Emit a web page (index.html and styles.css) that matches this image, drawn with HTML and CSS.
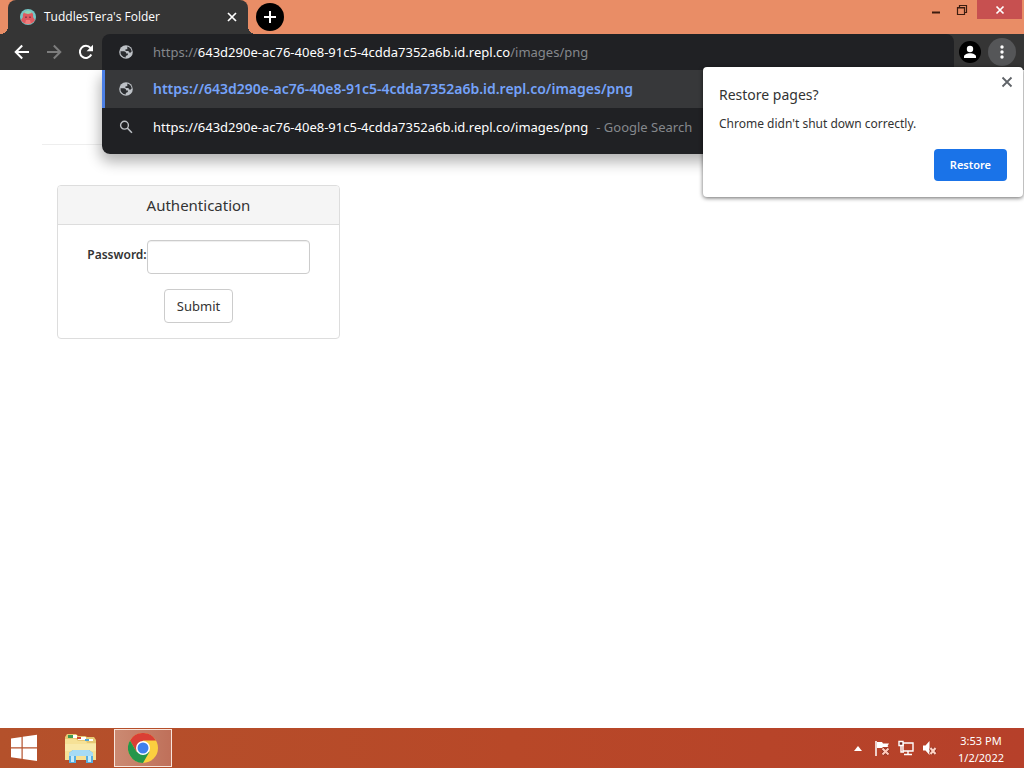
FILE: index.html
```html
<!DOCTYPE html>
<html lang="en">
<head>
<meta charset="utf-8">
<title>TuddlesTera's Folder</title>
<link rel="stylesheet" href="styles.css">
</head>
<body>
<svg class="defs" aria-hidden="true">
  <symbol id="globe" viewBox="0 0 16 16">
    <circle cx="8" cy="8" r="6.800" fill="#bdc1c6"/>
    <path d="M2.500 7.300h3.300c1.700 0 2.400 1 2.400 2.300h1.900c-.1 1.600-.8 2.200-2.300 2.300v1.700a5.600 5.600 0 0 1-5.300-6.300zM9.300 2.500c2.500.6 4.200 2.500 4.400 5L12.300 8.700c-1.300 0-1.700-.7-1.700-1.700H7.500V5.200h1.800z" fill="#2b2d30"/>
  </symbol>
</svg>
<header class="titlebar">
  <div class="tab">
    <svg class="favicon" viewBox="0 0 16 16"><circle cx="8" cy="8" r="8" fill="#74c6c6"/><path d="M3 8C2 3 6 2 8 3c3-1 6 1 5 5l2 3a8 8 0 0 1-14 0z" fill="#df5a60"/><path d="M4 4c2-3 6-3 8 0L8 5z" fill="#8fd6b5"/><path d="M5 7.500h2V9H5zm4 0h2V9H9z" fill="#8f3d49"/><path d="M6 11h4l1 4H5z" fill="#f07f7d"/></svg>
    <span class="tab-title">TuddlesTera's Folder</span>
    <button class="plain tab-close" aria-label="Close tab"><svg width="10" height="10" viewBox="0 0 10 10"><path d="M1 1l8 8M9 1L1 9" stroke="#fff" stroke-width="1.700"/></svg></button>
  </div>
  <button class="new-tab" aria-label="New tab"><svg width="12" height="12" viewBox="0 0 12 12"><path d="M6 0v12M0 6h12" stroke="#fff" stroke-width="2"/></svg></button>
  <div class="window-buttons">
    <button class="plain" aria-label="Minimize"><svg width="10" height="14" viewBox="0 0 10 14"><path d="M1 9.500h8" stroke="#3c1d10" stroke-width="2"/></svg></button>
    <button class="plain" aria-label="Restore window"><svg width="12" height="12" viewBox="0 0 12 12"><path d="M1.500 3.500h7v7h-7zM1 4h8M3.500 3V1.500h7v7H9" fill="none" stroke="#3c1d10" stroke-width="1.200"/></svg></button>
    <button class="plain window-close" aria-label="Close window"><svg width="10" height="10" viewBox="0 0 10 10"><path d="M1.500 1.500l7 7M8.500 1.500l-7 7" stroke="#fff" stroke-width="1.700"/></svg></button>
  </div>
</header>
<nav class="toolbar">
  <div class="nav-buttons">
    <button class="plain" aria-label="Back"><svg width="16" height="16" viewBox="0 0 16 16"><path d="M15 8H2M8.200 1.500 1.700 8l6.500 6.500" fill="none" stroke="#fff" stroke-width="2"/></svg></button>
    <button class="plain" aria-label="Forward"><svg width="16" height="16" viewBox="0 0 16 16"><path d="M1 8h13M7.800 1.500 14.300 8l-6.500 6.500" fill="none" stroke="#7d7d7d" stroke-width="2"/></svg></button>
    <button class="plain" aria-label="Reload"><svg width="16" height="16" viewBox="0 0 16 16"><path d="M13.300 10.500A6 6 0 1 1 12.500 4" fill="none" stroke="#fff" stroke-width="2"/><path d="M15 .8v6.400H8.600z" fill="#fff"/></svg></button>
  </div>
  <div class="omnibox">
    <div class="row address"><svg class="row-icon"><use href="#globe"/></svg><span class="dim">https://<span class="host">643d290e-ac76-40e8-91c5-4cdda7352a6b.id.repl.co</span>/images/png</span></div>
    <div class="suggestions">
      <a class="row selected" href="#"><svg class="row-icon"><use href="#globe"/></svg><span>https://643d290e-ac76-40e8-91c5-4cdda7352a6b.id.repl.co/images/png</span></a>
      <a class="row" href="#"><svg class="row-icon" viewBox="0 0 16 16"><circle cx="6.500" cy="6.200" r="3.900" fill="none" stroke="#bdc1c6" stroke-width="1.400"/><path d="M9.300 9l4.600 4.700" stroke="#bdc1c6" stroke-width="1.600"/></svg><span>https://643d290e-ac76-40e8-91c5-4cdda7352a6b.id.repl.co/images/png</span><span class="dim provider">- Google Search</span></a>
    </div>
  </div>
  <div class="tools">
    <button class="plain profile" aria-label="Profile"><svg width="22" height="22" viewBox="0 0 22 22"><circle cx="11" cy="11" r="11" fill="#000"/><circle cx="11" cy="8" r="3.200" fill="#fff"/><path d="M5 17v-1.500c0-2 3-3.300 6-3.300s6 1.300 6 3.300V17z" fill="#fff"/></svg></button>
    <button class="plain menu" aria-label="Menu"><svg width="4" height="14" viewBox="0 0 4 14" fill="#fff"><circle cx="2" cy="2" r="1.700"/><circle cx="2" cy="7" r="1.700"/><circle cx="2" cy="12" r="1.700"/></svg></button>
  </div>
  <section class="bubble">
    <button class="plain bubble-close" aria-label="Dismiss"><svg width="12" height="12" viewBox="0 0 12 12"><path d="M1.500 1.500l9 9M10.500 1.500l-9 9" stroke="#5f6368" stroke-width="1.800"/></svg></button>
    <h2>Restore pages?</h2>
    <p>Chrome didn't shut down correctly.</p>
    <button class="restore">Restore</button>
  </section>
</nav>
<main>
  <hr>
  <form class="card">
    <h1>Authentication</h1>
    <div class="card-body">
      <div class="field"><label for="password">Password:</label><input id="password" type="password"></div>
      <button class="submit" type="button">Submit</button>
    </div>
  </form>
</main>
<footer class="taskbar">
  <button class="plain start" aria-label="Start"><svg width="28" height="28" viewBox="0 0 28 28" fill="#fff"><path d="M1 4.500 11.500 3v10.300H1zM12.700 2.800 27 .8v12.500H12.700zM1 14.500h10.500v10.300L1 23.300zM12.700 14.500H27V27l-14.300-2z"/></svg></button>
  <button class="plain explorer" aria-label="File Explorer"><svg width="34" height="32" viewBox="0 0 34 32"><path d="M1 5 3 2h9l2 2h7l2 1h7l2 3v20H1z" fill="#e6c873"/><path d="M4 3h5v3H4z" fill="#3e9b50"/><path d="M9 3h4v3H9zM14 5h8v3h-8zM24 7h5v2h-5z" fill="#fff"/><path d="M13 5h4v2h-4z" fill="#cf4a33"/><path d="M21 7h4v2h-4z" fill="#4aa3d2"/><path d="M1 7h11l2 2h8l1 2h9v17H1z" fill="#f6e196"/><path d="M1 12h31v7H1z" fill="#f9e9a9"/><path d="M5 31V21l4-3h16l4 3v10h-7v-7H12v7z" fill="#57aee0"/><path d="M5 21l4-3h16l4 3v3H5z" fill="#a6dbf5"/><path d="M7 24h3v6H7zM24 24h3v6h-3z" fill="#c5eafa"/></svg></button>
  <button class="plain chrome" aria-label="Google Chrome"><svg width="30" height="30" viewBox="0 0 30 30"><circle cx="15" cy="15" r="15" fill="#fbd03f"/><path d="M2 7.500A15 15 0 0 1 28 7.500H15L8.500 18.800z" fill="#da3f35"/><path d="M2 7.500 8.500 18.700 21.500 18.700 15 30A15 15 0 0 1 2 7.500z" fill="#24964b"/><circle cx="15" cy="15" r="7" fill="#fff"/><circle cx="15" cy="15" r="5.500" fill="#3f80ed"/></svg></button>
  <div class="tray">
    <svg width="8" height="5" viewBox="0 0 8 5"><path d="M0 5 4 0l4 5z" fill="#fff"/></svg>
    <svg width="16" height="16" viewBox="0 0 16 16"><path d="M2 1v15" stroke="#fff" stroke-width="1.500"/><path d="M3 2h5l1 1.500h6L13.500 6l1 1H9L8 8H3z" fill="#fff"/><path d="M8.500 8.500l6 6M14.500 8.500l-6 6" stroke="#7c261c" stroke-width="3.500"/><path d="M8.500 8.500l6 6M14.500 8.500l-6 6" stroke="#ffc9b9" stroke-width="2.200"/></svg>
    <svg width="16" height="16" viewBox="0 0 16 16" fill="none" stroke="#fff" stroke-width="1.400"><path d="M5 3h10v8H5zM10 11v3M6 14.500h8"/><path d="M1 1.500h4v4H1z" fill="#732a20"/><path d="M3 5.500V12h3"/></svg>
    <svg width="16" height="16" viewBox="0 0 16 16"><path d="M1 5.500h2.500L7.500 1v14l-4-4.500H1z" fill="#fff"/><path d="M8.500 8l5 6M13.500 8l-5 6" stroke="#7c261c" stroke-width="3.500"/><path d="M8.500 8l5 6M13.500 8l-5 6" stroke="#ffd2c3" stroke-width="2.200"/></svg>
  </div>
  <div class="clock"><span>3:53 PM</span><span>1/2/2022</span></div>
</footer>
</body>
</html>
```
FILE: styles.css
```css
* { box-sizing: border-box; }
body {
  margin: 0;
  min-height: 100vh;
  display: flex;
  flex-direction: column;
  background: #fff;
  color: #333;
  font: 13px/18px "Noto Sans", "Open Sans", sans-serif;
}
.defs { position: absolute; width: 0; height: 0; }
button { font: inherit; }
.plain { border: 0; padding: 0; background: none; display: flex; align-items: center; justify-content: center; }

.titlebar { display: flex; height: 34px; background: #e98d66; padding-left: 8px; }
.tab {
  position: relative;
  width: 240px;
  display: flex;
  align-items: center;
  gap: 8px;
  padding: 0 11px 0 12px;
  background: #353535;
  border-radius: 8px 8px 0 0;
  color: #fff;
  font-size: 12px;
}
.tab::before, .tab::after { content: ""; position: absolute; bottom: 0; width: 8px; height: 8px; }
.tab::before { left: -8px; background: radial-gradient(circle at 0 0, transparent 8px, #353535 8px); }
.tab::after { right: -8px; background: radial-gradient(circle at 100% 0, transparent 8px, #353535 8px); }
.favicon { width: 16px; height: 16px; }
.tab-title { flex: 1; white-space: nowrap; font-family: "Open Sans", sans-serif; }
.new-tab {
  width: 28px; height: 28px; margin: 3px 0 0 8px; padding: 0;
  border: 0; border-radius: 50%; background: #000;
  display: flex; align-items: center; justify-content: center;
}
.window-buttons { margin-left: auto; display: flex; height: 19px; margin-right: 2px; }
.window-buttons .plain { width: 26px; }
.window-buttons .window-close { width: 45px; background: #c75050; margin-left: 2px; }

.toolbar { position: relative; z-index: 1; display: flex; height: 36px; background: #353535; }
.nav-buttons { display: flex; align-items: center; gap: 16px; width: 102px; padding-left: 14px; }
.omnibox { position: relative; flex: 1; background: #202124; border-radius: 8px 8px 0 0; min-width: 0; }
.row { display: flex; align-items: center; height: 38px; padding-left: 16px; color: #fff; text-decoration: none; white-space: nowrap; }
.address { height: 36px; }
.row-icon { width: 16px; height: 16px; margin-right: 19px; flex: none; }
.dim { color: #85888c; }
.host { color: #fff; }
.provider { margin-left: 8px; }
.suggestions {
  position: absolute; top: 100%; left: 0; right: 0;
  padding-bottom: 8px;
  background: #202124;
  border-radius: 0 0 8px 8px;
  overflow: hidden;
}
.omnibox::before { content: ""; position: absolute; inset: 36px 0 -84px; border-radius: 8px; box-shadow: 0 6px 14px 2px rgba(0, 0, 0, 0.3); clip-path: inset(0 -30px -30px); }
.selected { background: #37383a; border-left: 3px solid #4c80e6; padding-left: 13px; color: #75a3fa; font-weight: 600; font-size: 14px; }
.tools { display: flex; align-items: center; gap: 7px; width: 70px; padding-left: 5px; }
.profile { width: 22px; }
.menu { width: 28px; height: 28px; border-radius: 50%; background: #555658; }

.bubble {
  position: absolute; top: 33px; right: 1px;
  width: 320px;
  padding: 18px 16px 16px;
  display: flex; flex-direction: column;
  background: #fff;
  border-radius: 4px;
  box-shadow: 0 1px 4px rgba(0, 0, 0, 0.6);
}
.bubble h2 { margin: 0; font-size: 14px; font-weight: 400; line-height: 20px; }
.bubble p { margin: 10px 0 16px; font-size: 12px; }
.bubble-close { position: absolute; top: 9px; right: 10px; }
.restore { align-self: flex-end; height: 32px; padding: 0 16px; border: 0; border-radius: 4px; background: #1a73e8; color: #fff; font-size: 11px; font-weight: 600; }

main { flex: 1; padding: 74px 42px 0; }
hr { margin: 0; border: 0; border-top: 1px solid #eee; }
.card { width: 283px; margin: 40px 0 0 15px; border: 1px solid #ddd; border-radius: 4px; overflow: hidden; }
.card h1 { margin: 0; padding: 10px 15px; background: #f5f5f5; border-bottom: 1px solid #ddd; font-size: 15px; font-weight: 400; line-height: 18px; text-align: center; }
.card-body { display: flex; flex-direction: column; align-items: center; gap: 15px; padding: 15px; }
.field { display: flex; }
.field label { padding-top: 6px; font-size: 12px; font-weight: 600; }
.field input { width: 163px; height: 34px; border: 1px solid #ccc; border-radius: 4px; padding: 6px 12px; box-shadow: inset 0 1px 1px rgba(0, 0, 0, 0.07); }
.submit { height: 34px; padding: 0 12px; border: 1px solid #ccc; border-radius: 4px; background: #fff; color: #333; font-size: 13px; }

.taskbar { display: flex; align-items: center; height: 40px; background: linear-gradient(90deg, #b4512b, #b84828 50%, #b6402a); color: #fff; }
.start { width: 48px; height: 40px; }
.explorer { width: 66px; height: 40px; }
.chrome { width: 58px; height: 38px; border: 1px solid #f8e5dc; background: linear-gradient(90deg, #cb8a72, #bf705a); }
.tray { display: flex; align-items: center; gap: 8px; margin-left: auto; }
.tray svg:first-child { margin-right: 4px; }
.clock { display: flex; flex-direction: column; width: 86px; text-align: center; font-size: 11px; line-height: 17px; padding-top: 2px; }
```
